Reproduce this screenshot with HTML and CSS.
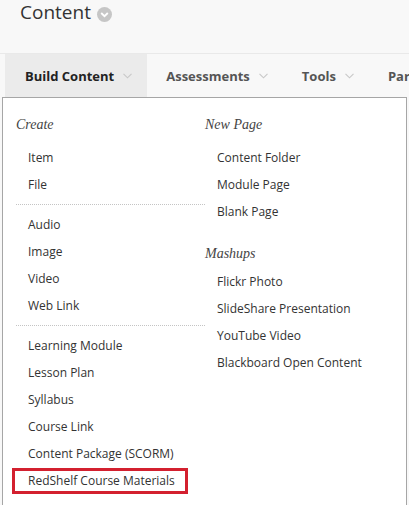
FILE: index.html
```html
<!DOCTYPE html>
<html>
<head>
<meta charset="utf-8">
<link rel="stylesheet" href="styles.css">
</head>
<body>
<header class="title-bar">
  <h1 class="title">Content</h1>
  <svg class="title-icon" width="15" height="15" viewBox="0 0 15 15"><circle cx="7.5" cy="7.5" r="7.5" fill="#c6c6c6"/><polyline points="4.2,6 7.5,9.2 10.8,6" fill="none" stroke="#fff" stroke-width="1.8"/></svg>
</header>
<nav class="nav">
  <div class="tab active">Build Content<svg class="chev" width="9" height="6" viewBox="0 0 9 6"><polyline points="0.5,0.8 4.5,4.8 8.5,0.8" fill="none" stroke="#c8c8c8" stroke-width="1.1"/></svg></div>
  <div class="tab">Assessments<svg class="chev" width="9" height="6" viewBox="0 0 9 6"><polyline points="0.5,0.8 4.5,4.8 8.5,0.8" fill="none" stroke="#c8c8c8" stroke-width="1.1"/></svg></div>
  <div class="tab">Tools<svg class="chev" width="9" height="6" viewBox="0 0 9 6"><polyline points="0.5,0.8 4.5,4.8 8.5,0.8" fill="none" stroke="#c8c8c8" stroke-width="1.1"/></svg></div>
  <div class="tab">Partner Content</div>
</nav>
<div class="menu">
  <div class="col col-left">
    <div class="head">Create</div>
    <ul class="list">
      <li>Item</li>
      <li>File</li>
    </ul>
    <div class="sep"></div>
    <ul class="list">
      <li>Audio</li>
      <li>Image</li>
      <li>Video</li>
      <li>Web Link</li>
    </ul>
    <div class="sep"></div>
    <ul class="list">
      <li>Learning Module</li>
      <li>Lesson Plan</li>
      <li>Syllabus</li>
      <li>Course Link</li>
      <li>Content Package (SCORM)</li>
      <li class="highlight">RedShelf Course Materials</li>
    </ul>
  </div>
  <div class="col col-right">
    <div class="head">New Page</div>
    <ul class="list">
      <li>Content Folder</li>
      <li>Module Page</li>
      <li>Blank Page</li>
    </ul>
    <div class="head head-mid">Mashups</div>
    <ul class="list">
      <li>Flickr Photo</li>
      <li>SlideShare Presentation</li>
      <li>YouTube Video</li>
      <li>Blackboard Open Content</li>
    </ul>
  </div>
</div>
</body>
</html>
```
FILE: styles.css
```css
* { box-sizing: border-box; }
html, body { margin: 0; padding: 0; }
body {
  background: #f8f8f8;
  font-family: "Open Sans", "Liberation Sans", sans-serif;
  color: #333;
  overflow: hidden;
  height: 505px;
}
.title-bar {
  height: 54px;
  border-bottom: 1px solid #e9e9e9;
  display: flex;
  align-items: flex-start;
  padding-left: 20px;
}
.title {
  margin: 0;
  font-size: 19px;
  font-weight: 400;
  line-height: 24px;
  color: #333;
}
.title-icon {
  margin-left: 6px;
  margin-top: 7px;
}
.nav {
  display: flex;
  height: 43px;
  padding-left: 5px;
  white-space: nowrap;
  overflow: hidden;
}
.tab {
  display: flex;
  align-items: center;
  flex-shrink: 0;
  padding: 0 15px 0 19px;
  font-size: 13px;
  font-weight: 700;
  color: #555;
}
.tab.active {
  padding-left: 20px;
  background: #ebebeb;
  color: #222;
}
.chev {
  margin-left: 9px;
  margin-top: 1px;
}
.menu {
  margin-left: 2px;
  width: 405px;
  height: 420px;
  background: #fff;
  border: 1px solid #a6a6a6;
  border-bottom: none;
  display: grid;
  grid-template-columns: 189px 1fr;
  padding: 17px 0 0 13px;
}
.head {
  font-family: "Liberation Serif", serif;
  font-style: italic;
  font-size: 14px;
  line-height: 20px;
  color: #444;
  margin-bottom: 9px;
}
.head-mid {
  margin-top: 19px;
  margin-bottom: 4px;
}
.list {
  list-style: none;
  margin: 0;
  padding: 0;
}
.list li {
  font-size: 12px;
  line-height: 27px;
  height: 27px;
  padding-left: 12px;
  color: #333;
  white-space: nowrap;
}
.sep {
  margin: 6px 0;
  border-top: 1px dotted #c4c4c4;
}
.list li.highlight {
  margin-left: -4px;
  margin-top: 1px;
  width: 176px;
  height: 26px;
  line-height: 20px;
  border: 3px solid #d3202f;
  padding-left: 13px;
}
```
